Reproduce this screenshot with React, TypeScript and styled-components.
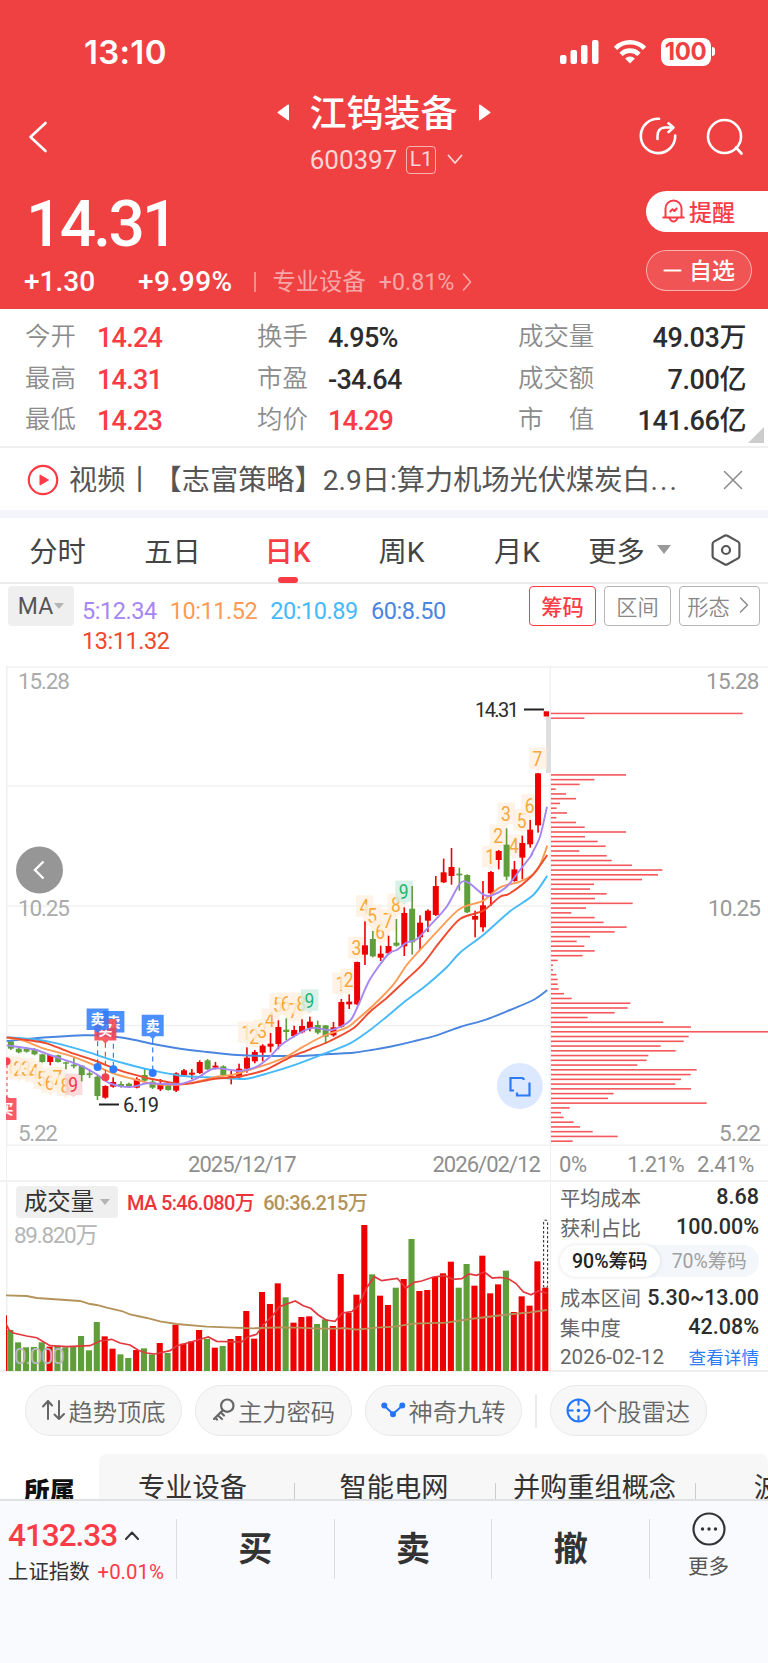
import React from "react";
import styled, { createGlobalStyle, css } from "styled-components";

const RED = "#fb3b45";
const UP = "#ee0000";
const DOWN = "#5f9e3a";
const BRAND = "#f04142";

const GlobalStyle = createGlobalStyle`
  * { box-sizing: border-box; }
  body { margin: 0; background: #fff; }
  #root { width: 768px; }
`;

const Page = styled.div`
  width: 768px;
  height: 1663px;
  overflow: hidden;
  display: flex;
  flex-direction: column;
  font-family: Roboto, "Noto Sans CJK SC", sans-serif;
  color: #333;
  white-space: nowrap;
`;

/* ---------- header ---------- */

const Header = styled.header`
  height: 309px;
  background: ${BRAND};
  color: #fff;
`;

const StatusBar = styled.div`
  height: 88px;
  padding: 15px 53px 0 84px;
  display: flex;
  align-items: center;
  justify-content: space-between;
`;

const Clock = styled.span`
  font: 600 33px/40px Inter, sans-serif;
  letter-spacing: 0.3px;
`;

const StatusIcons = styled.div`
  display: flex;
  align-items: center;
`;

const Battery = styled.div`
  width: 50px;
  height: 28px;
  margin-left: 14px;
  border-radius: 8px;
  background: #fff;
  color: ${BRAND};
  text-align: center;
  font: 700 24px/28px Inter, sans-serif;
  letter-spacing: -0.4px;
`;

const BatteryCap = styled.div`
  width: 3px;
  height: 9px;
  margin-left: 1.5px;
  border-radius: 0 4px 4px 0;
  background: #fff;
`;

const NavBar = styled.div`
  height: 94px;
  padding: 0 24px 0 28px;
  display: grid;
  grid-template-columns: 130px 1fr 130px;
  align-items: center;
  > svg { margin-top: 3px; }
`;

const NavTitle = styled.div`
  display: flex;
  flex-direction: column;
  align-items: center;
  padding-right: 5px;
`;

const TitleRow = styled.div`
  height: 48px;
  display: flex;
  align-items: center;
  gap: 20px;
  font-size: 37px;
  font-weight: 500;
  line-height: 44px;
  span { padding-top: 5px; }
`;

const CodeRow = styled.div`
  height: 46px;
  display: flex;
  align-items: center;
  padding: 1px 0 0 6px;
  font-size: 26px;
  color: rgba(255, 255, 255, 0.78);
`;

const LevelTag = styled.span`
  width: 30px;
  height: 28px;
  margin: 0 11px 0 9px;
  border: 1.5px solid rgba(255, 255, 255, 0.6);
  border-radius: 4px;
  text-align: center;
  font-size: 21px;
  line-height: 25px;
`;

const NavActions = styled.div`
  display: flex;
  justify-content: flex-end;
  align-items: center;
  gap: 29px;
  padding-top: 1px;
`;

const PriceBlock = styled.div`
  height: 127px;
  display: flex;
  justify-content: space-between;
`;

const PriceMain = styled.div`
  padding-left: 24px;
`;

const Price = styled.div`
  height: 81px;
  padding-left: 2px;
  font-size: 64px;
  font-weight: 500;
  line-height: 85px;
  letter-spacing: -2.7px;
`;

const ChangeRow = styled.div`
  height: 36px;
  display: flex;
  align-items: center;
  padding-top: 1px;
  font-size: 28px;
  line-height: 36px;
`;

const Change = styled.span<{ $w: number; $ls?: number }>`
  width: ${(p) => p.$w}px;
  font-weight: 500;
  letter-spacing: ${(p) => p.$ls ?? 0}px;
`;

const Divider = styled.i<{ $h: number; $color: string }>`
  width: 1.5px;
  height: ${(p) => p.$h}px;
  background: ${(p) => p.$color};
`;

const Sector = styled.span`
  display: flex;
  align-items: center;
  margin-left: 17px;
  font-size: 23.3px;
  color: rgba(255, 255, 255, 0.55);
  svg { margin-left: 8px; }
  b { font-weight: 400; margin-left: 13px; }
`;

const PriceActions = styled.div`
  width: 122px;
  padding-top: 9px;
  display: flex;
  flex-direction: column;
  gap: 18px;
`;

const pill = css`
  height: 41px;
  display: flex;
  align-items: center;
  padding-bottom: 2px;
  font-size: 23px;
  font-weight: 500;
`;

const RemindButton = styled.div`
  ${pill}
  padding-left: 16px;
  gap: 4px;
  border-radius: 21px 0 0 21px;
  background: #fff;
  color: ${RED};
`;

const WatchButton = styled.div`
  ${pill}
  width: 106px;
  padding-left: 16px;
  padding-bottom: 3px;
  gap: 7px;
  border: 1.5px solid rgba(255, 255, 255, 0.55);
  border-radius: 21px;
  background: rgba(255, 255, 255, 0.1);
  svg { margin-top: 3px; }
`;

/* ---------- quote grid ---------- */

const Quotes = styled.section`
  position: relative;
  height: 139px;
  padding: 8px 22px 0 25px;
  display: grid;
  grid-template-columns: 72px 160px 71px 190px 77px 1fr;
  grid-auto-rows: 41.5px;
  align-items: center;
  border-bottom: 2px solid #efefef;
`;

const QLabel = styled.span`
  font-size: 25.4px;
  line-height: 36px;
  color: #8c8c8c;
  padding-bottom: 3px;
  font-weight: 350;
`;

const QValue = styled.span<{ $up?: boolean; $end?: boolean }>`
  padding-top: 1px;
  font-size: 27px;
  font-weight: 500;
  line-height: 36px;
  letter-spacing: ${(p) => (p.$end ? -0.4 : -0.75)}px;
  color: ${(p) => (p.$up ? RED : "#2d2d2d")};
  text-align: ${(p) => (p.$end ? "right" : "left")};
`;

const Corner = styled.i`
  position: absolute;
  right: 4px;
  bottom: 3px;
  border: solid transparent;
  border-width: 0 0 16px 16px;
  border-bottom-color: #ccc;
`;

/* ---------- news ---------- */

const News = styled.section`
  height: 70px;
  padding: 1px 25px 0 27px;
  display: flex;
  align-items: center;
  border-bottom: 8px solid #f3f5fa;
`;

const NewsText = styled.span`
  flex: 1;
  margin-left: 10px;
  padding-top: 2px;
  font-size: 28.2px;
  line-height: 40px;
  color: #555;
  b { font-weight: 400; letter-spacing: 2px; }
`;

/* ---------- period tabs ---------- */

const Tabs = styled.nav`
  height: 66px;
  display: grid;
  grid-template-columns: 115px 115px 115px 113px 118px 107px 1fr;
  border-bottom: 2px solid #ebebeb;
`;

const Tab = styled.div<{ $active?: boolean }>`
  position: relative;
  display: flex;
  align-items: center;
  justify-content: center;
  gap: 12px;
  padding-bottom: 1px;
  font-size: 28.3px;
  font-weight: ${(p) => (p.$active ? 500 : 400)};
  color: ${(p) => (p.$active ? RED : "#444")};
  ${(p) =>
    p.$active &&
    css`
      &::after {
        content: "";
        position: absolute;
        bottom: -1px;
        width: 20px;
        height: 6px;
        border-radius: 3px;
        background: ${RED};
      }
    `}
`;

const Caret = styled.i<{ $size: number }>`
  border: ${(p) => p.$size}px solid transparent;
  border-top: ${(p) => p.$size * 1.3}px solid #999;
  border-bottom: 0;
`;

/* ---------- indicator bar ---------- */

const IndicatorBar = styled.div`
  height: 82px;
  padding: 2px 8px 0;
  display: flex;
  align-items: flex-start;
`;

const Selector = styled.div<{ $w: number; $h: number; $font: number; $ink: string; $gap: number }>`
  width: ${(p) => p.$w}px;
  height: ${(p) => p.$h}px;
  display: flex;
  align-items: center;
  justify-content: center;
  gap: ${(p) => p.$gap}px;
  flex: none;
  border-radius: 4px;
  background: #efefef;
  font-size: ${(p) => p.$font}px;
  color: ${(p) => p.$ink};
  i { border-top-color: #b3b3b3; }
`;

const MaList = styled.div`
  width: 440px;
  padding: 10px 0 0 8px;
  display: flex;
  flex-wrap: wrap;
  column-gap: 13px;
`;

const MaItem = styled.span<{ $color: string }>`
  height: 30px;
  line-height: 30px;
  font-size: 23.5px;
  letter-spacing: -0.45px;
  color: ${(p) => p.$color};
`;

const ModeGroup = styled.div`
  margin-left: auto;
  display: flex;
  gap: 8px;
`;

const Mode = styled.div<{ $active?: boolean; $w?: number }>`
  width: ${(p) => p.$w ?? 67}px;
  height: 40px;
  display: flex;
  align-items: center;
  justify-content: center;
  gap: ${(p) => (p.$w ? 9 : 0)}px;
  padding: ${(p) => (p.$w ? "0 3px 2px 0" : "0 0 2px")};
  border: 1.5px solid ${(p) => (p.$active ? RED : "#b5b5b5")};
  border-radius: 4px;
  font-size: 21.3px;
  font-weight: ${(p) => (p.$active ? 500 : 350)};
  color: ${(p) => (p.$active ? RED : "#888")};
`;

/* ---------- charts ---------- */

const ChartArea = styled.section`
  height: 480px;
  display: grid;
  grid-template-columns: 551px 217px;
  svg { display: block; }
`;

const AxisRow = styled.div`
  height: 36px;
  display: grid;
  grid-template-columns: 551px 217px;
  border-bottom: 2px solid #f1f1f1;
  font-size: 22px;
  color: #8e8e8e;
`;

const AxisCell = styled.div<{ $side?: boolean }>`
  display: flex;
  align-items: center;
  justify-content: space-between;
  letter-spacing: ${(p) => (p.$side ? -0.4 : -0.95)}px;
  margin-left: ${(p) => (p.$side ? -1 : 6)}px;
  padding: ${(p) => (p.$side ? "3px 14px 0 8px" : "3px 11px 0 181px")};
  border-left: 1.5px solid #efefef;
  span:nth-child(2) { margin-left: ${(p) => (p.$side ? 28 : 0)}px; }
`;

const VolumeRow = styled.section`
  height: 190px;
  display: grid;
  grid-template-columns: 551px 217px;
  border-bottom: 2px solid #efefef;
`;

const VolumePane = styled.div`
  position: relative;
`;

const VolumeHead = styled.div`
  position: absolute;
  left: 16px;
  top: 3px;
  display: flex;
  align-items: center;
  font-size: 20px;
  line-height: 32px;
`;

const VolumeMa = styled.span<{ $color: string }>`
  margin-left: 9px;
  padding-top: 2px;
  font-weight: 500;
  letter-spacing: -0.65px;
  color: ${(p) => p.$color};
`;

const CostPanel = styled.div`
  padding: 0 9px 0 9px;
  border-left: 1.5px solid #efefef;
  margin-left: -1px;
`;

const CostRow = styled.div`
  height: 29.7px;
  display: flex;
  align-items: center;
  justify-content: space-between;
  font-size: 20.3px;
  color: #666;
`;

const CostValue = styled.b`
  font-size: 21.5px;
  font-weight: 500;
  color: #2d2d2d;
`;

const DateText = styled.span`
  font-size: 20.6px;
`;

const DetailLink = styled.a`
  font-size: 17.6px;
  color: #2b7bf8;
`;

const Toggle = styled.div`
  height: 32px;
  margin: 4px 0 5px;
  display: flex;
  border-radius: 16px;
  background: #f3f6fb;
`;

const ToggleItem = styled.div<{ $active?: boolean }>`
  flex: 1;
  border-radius: 16px;
  text-align: center;
  font-size: 19.5px;
  line-height: 33px;
  font-weight: ${(p) => (p.$active ? 500 : 400)};
  color: ${(p) => (p.$active ? "#222" : "#a0a0a0")};
  background: ${(p) => (p.$active ? "#fff" : "transparent")};
  box-shadow: ${(p) => (p.$active ? "0 0 4px rgba(0,0,0,0.12)" : "none")};
`;

/* ---------- chips ---------- */

const ToolRow = styled.div`
  height: 82px;
  padding: 13px 25px 0;
  display: flex;
  gap: 13px;
`;

const ToolChip = styled.div`
  width: 157px;
  height: 51px;
  display: flex;
  align-items: center;
  justify-content: center;
  gap: 2px;
  padding-bottom: 1px;
  border: 1.5px solid #e9e9e9;
  border-radius: 26px;
  background: #f7f7f7;
  font-size: 24.3px;
  font-weight: 350;
  color: #666;
`;

const ToolSplit = styled.i`
  width: 1.5px;
  height: 34px;
  margin-top: 9px;
  background: #ececec;
`;

/* ---------- concepts ---------- */

const Concepts = styled.div`
  height: 45px;
  overflow: hidden;
  display: flex;
`;

const ConceptHead = styled.div`
  width: 99px;
  flex: none;
  padding: 19px 0 0 24px;
  font-size: 25.5px;
  font-weight: 900;
  line-height: 36px;
  color: #111;
`;

const ConceptStrip = styled.div`
  width: 669px;
  flex: none;
  overflow: hidden;
  display: flex;
  border-radius: 8px 8px 0 0;
  background: #f7f7f7;
`;

const Concept = styled.div<{ $w: number; $pad: number }>`
  width: ${(p) => p.$w}px;
  flex: none;
  padding-top: 15px;
  padding-right: ${(p) => p.$pad}px;
  text-align: center;
  font-size: 27.2px;
  line-height: 38px;
  color: #333;
  background: linear-gradient(#ccc, #ccc) right 29px / 1.5px 30px no-repeat;
`;

/* ---------- bottom bar ---------- */

const BottomBar = styled.footer`
  height: 164px;
  padding-top: 18px;
  display: flex;
  align-items: flex-start;
  border-top: 2px solid #e0e1e4;
  background: #f9fafd;
`;

const IndexBox = styled.div`
  width: 176px;
  padding-left: 8px;
`;

const IndexValue = styled.div`
  height: 37px;
  display: flex;
  align-items: center;
  gap: 8px;
  margin-top: -2px;
  font-size: 31.5px;
  font-weight: 500;
  letter-spacing: -1px;
  line-height: 37px;
  color: ${RED};
`;

const IndexName = styled.div`
  margin-top: 2px;
  font-size: 20.4px;
  line-height: 32px;
  span { margin-left: 8px; color: ${RED}; }
`;

const TradeButton = styled.div`
  width: 157.7px;
  height: 60px;
  border-left: 1.5px solid #dcdde0;
  text-align: center;
  font-size: 34px;
  font-weight: 700;
  line-height: 60px;
`;

const MoreButton = styled.div`
  flex: 1;
  height: 60px;
  display: flex;
  flex-direction: column;
  align-items: center;
  padding-right: 1px;
  border-left: 1.5px solid #dcdde0;
  font-size: 20.6px;
  line-height: 30px;
  color: #555;
  svg { flex: none; margin: -7px 0 6px; }
`;

/* ---------- chart data ---------- */

type Pt = [number, number];
const STEP = 7.868;
const candleX = (i: number) => 10.9 + STEP * i;

/* direction, high, body top, body bottom, low */
type Candle = [number, number, number, number, number];
const scaleRows = (base: number, rows: Candle[]): Candle[] =>
  rows.map(([d, ...v]) => [d, ...v.map((n) => base + n / 3)] as Candle);

const candles: Candle[] = [
  ...scaleRows(960, [
    [0, 244, 244, 266, 270], [0, 262, 266, 277, 280], [0, 262, 266, 275, 278],
    [0, 264, 267, 283, 286], [0, 281, 283, 306, 308], [1, 283, 285, 306, 316],
    [0, 284, 286, 306, 308], [0, 305, 307, 311, 328], [0, 292, 314, 319, 325],
    [0, 315, 317, 345, 364], [0, 328, 340, 345, 354], [0, 345, 350, 408, 420],
    [1, 376, 378, 413, 416], [1, 352, 366, 380, 383], [0, 364, 372, 379, 383],
    [0, 368, 371, 381, 384], [1, 352, 357, 383, 385], [0, 325, 345, 362, 366],
    [0, 360, 365, 383, 387], [1, 357, 372, 388, 393], [0, 370, 373, 390, 392],
    [1, 337, 340, 392, 396], [1, 327, 331, 346, 349], [1, 327, 338, 344, 357],
    [1, 301, 306, 339, 342], [0, 297, 301, 328, 330], [1, 306, 317, 323, 328],
    [0, 316, 319, 345, 349], [1, 333, 348, 354, 373], [1, 311, 326, 352, 359],
    [1, 262, 293, 326, 338], [1, 270, 276, 304, 310], [1, 253, 257, 278, 304],
    [1, 219, 251, 260, 277],
  ]),
  ...scaleRows(840, [
    [1, 541, 561, 612, 628], [0, 535, 569, 576, 601], [1, 557, 570, 588, 592],
    [1, 538, 558, 577, 580], [1, 530, 545, 564, 574], [0, 542, 555, 578, 583],
    [0, 555, 556, 590, 612], [1, 546, 562, 586, 590], [1, 477, 486, 560, 563],
    [1, 463, 485, 493, 507], [1, 365, 366, 493, 495], [1, 244, 316, 344, 375],
    [0, 273, 297, 349, 352], [1, 317, 341, 353, 363], [1, 287, 318, 340, 345],
    [0, 237, 308, 317, 320], [1, 202, 219, 319, 348], [0, 138, 206, 307, 344],
    [1, 226, 248, 292, 330], [1, 208, 212, 242, 276], [1, 108, 138, 225, 228],
    [1, 56, 97, 127, 129], [1, 24, 81, 108, 134], [0, 83, 101, 106, 152],
    [0, 103, 105, 217, 219], [1, 212, 228, 239, 292],
  ]),
  ...scaleRows(690, [
    [1, 573, 646, 712, 725], [1, 543, 546, 610, 648], [1, 480, 483, 510, 538],
    [0, 415, 464, 560, 571], [1, 513, 538, 573, 575], [1, 437, 459, 503, 568],
    [1, 390, 419, 463, 473], [1, 249, 250, 406, 428],
  ]),
];

const at = (ox: number, oy: number, pts: Pt[]): Pt[] =>
  pts.map(([x, y]) => [ox + x / 3, oy + y / 3]);

const averages: { color: string; pts: Pt[] }[] = [
  {
    color: "#4a85e0",
    pts: [
      ...at(0, 960, [[20, 243], [90, 236], [170, 230], [250, 226], [320, 227], [390, 237], [460, 252], [540, 266], [620, 276], [700, 284], [760, 287], [840, 288]]),
      ...at(220, 840, [[250, 648], [330, 642], [400, 638], [460, 629], [520, 618], [580, 604], [650, 586], [720, 561], [800, 538], [870, 510], [940, 480], [982, 450]]),
    ],
  },
  {
    color: "#45b9f9",
    pts: [
      ...at(0, 960, [[20, 232], [100, 238], [160, 248], [250, 272], [320, 295], [380, 312], [460, 332], [540, 347], [620, 352], [680, 355], [740, 356]]),
      ...at(220, 840, [[150, 698], [220, 676], [300, 646], [390, 610], [450, 570], [500, 530], [560, 480], [620, 435], [680, 382], [720, 338], [790, 285], [870, 214], [940, 165], [982, 107]]),
    ],
  },
  {
    color: "#ff9b55",
    pts: [
      ...at(0, 960, [[20, 233], [70, 242], [130, 265], [200, 284], [270, 310], [340, 340], [400, 357], [460, 371], [540, 374], [600, 363], [650, 350], [700, 344]]),
      ...at(220, 840, [[80, 692], [150, 670], [200, 650], [250, 620], [310, 588], [380, 563], [410, 540], [460, 496], [520, 434], [560, 375], [600, 330], [660, 265], [720, 206], [790, 182], [840, 142], [900, 125], [940, 103], [960, 75], [982, 17]]),
    ],
  },
  {
    color: "#f04a2c",
    pts: [
      ...at(0, 960, [[20, 232], [80, 240], [140, 250], [210, 277], [280, 300], [350, 328], [400, 343], [460, 358], [540, 372], [580, 369], [640, 357], [700, 352]]),
      ...at(220, 840, [[80, 705], [140, 688], [210, 652], [270, 628], [330, 603], [400, 565], [450, 515], [500, 474], [560, 418], [610, 370], [660, 305], [720, 237], [790, 212], [840, 170], [870, 160], [935, 108], [982, 45]]),
    ],
  },
  {
    color: "#a586f2",
    pts: [
      ...at(0, 960, [[20, 256], [100, 268], [150, 285], [240, 316], [290, 343], [330, 370], [390, 381], [440, 370], [480, 371], [540, 372], [590, 355], [640, 326], [700, 331]]),
      ...at(220, 840, [[60, 693], [110, 680], [150, 650], [190, 610], [270, 565], [335, 570], [390, 542], [415, 495], [450, 418], [505, 342], [530, 330], [560, 308], [590, 298], [625, 262], [680, 200], [720, 130], [745, 128], [790, 164], [815, 166], [860, 140], [900, 90], [935, 45]]),
      ...at(450, 690, [[245, 492], [270, 440], [291, 350]]),
    ],
  },
];

/* candle index, text, centre y, kind */
type Turn = [number, string, number, string?];
const turns: Turn[] = [
  ...([322, 328, 328, 337, 357, 368, 355, 378, 375].map((y, i) => [i, String(i + 1), 960 + y / 3, i === 8 ? "sell" : ""]) as Turn[]),
  ...([578, 590, 572, 540, 495, 492, 512, 492, 482].map((y, i) => [30 + i, String(i + 1), 840 + y / 3, i === 8 ? "buy" : ""]) as Turn[]),
  ...([432, 420, 325, 200, 228, 275, 242, 195, 156].map((y, i) => [42 + i, String(i + 1), 840 + y / 3, i === 8 ? "buy" : ""]) as Turn[]),
  ...([502, 438, 372, 468, 392, 347, 206].map((y, i) => [61 + i, String(i + 1), 690 + y / 3, ""]) as Turn[]),
];
const turnStyle: Record<string, [string, string]> = {
  "": ["#fef0e0", "#f9a63a"],
  sell: ["#fbd3d6", "#f2383f"],
  buy: ["#cfeee2", "#22b573"],
};

const costHead = [608, 133];
const costBars = [
  258, 163, 119, 47, 78, 108, 60, 50, 81, 49, 108, 134, 258, 135, 173, 197, 118, 200, 215, 276, 367, 354, 306, 162, 150,
  200, 165, 278, 138, 94, 164, 191, 260, 224, 150, 110, 133, 164, 128, 53, 39, 39, 49, 53, 53, 56, 72, 95, 271, 263, 224,
  143, 370, 453, 684, 446, 431, 362, 407, 325, 320, 292, 470, 452, 423, 406, 453, 221, 204, 500, 89, 63, 71, 101, 120,
  158, 233, 98,
];

const volumeTops = [
  450, 487, 502, 501, 487, 500, 497, 502, 501, 468, 511, 426, 469, 506, 523, 534, 510, 505, 523, 489, 519, 434, 491, 484,
  450, 477, 503, 498, 477, 468, 393, 476, 336, 372, 310, 352, 428, 411, 409, 432, 418, 438, 282, 399, 344, 135, 283, 347,
  375, 323, 297, 177, 333, 330, 291, 280, 245, 323, 252, 317, 227, 340, 313, 272, 396, 349, 377, 244, 323,
];
const fallingVolume = new Set([0, 1, 2, 3, 4, 6, 7, 8, 9, 10, 11, 14, 15, 17, 18, 20, 25, 27, 35, 39, 40, 46, 49, 51, 57, 58, 63]);

const volumeFast: Pt[] = [
  ...at(0, 1180, [[18, 432], [27, 450], [40, 459], [80, 468], [110, 473], [150, 497], [200, 500], [270, 497], [300, 483], [335, 478], [360, 489], [390, 495], [415, 511], [440, 519], [465, 522], [510, 512], [530, 498], [570, 487], [625, 471], [650, 484], [725, 486], [745, 470], [770, 463], [790, 435], [820, 405]]),
  ...at(270, 1180, [[28, 380], [50, 372], [76, 363], [100, 377], [122, 385], [145, 405], [168, 420], [195, 424], [217, 399], [245, 395], [265, 378], [290, 323], [313, 290], [335, 302], [382, 295], [408, 325], [432, 307], [455, 303], [490, 291], [525, 287], [548, 298], [575, 296], [597, 282], [620, 286], [643, 276], [667, 294], [690, 292], [715, 296], [737, 310], [760, 335], [783, 344], [805, 333], [831, 340]]),
];
const volumeSlow: Pt[] = [
  ...at(0, 1180, [[18, 346], [80, 348], [110, 354], [240, 363], [270, 372], [290, 375], [320, 383], [365, 393], [390, 403], [440, 414], [480, 424], [530, 432], [620, 440], [700, 443], [760, 445]]),
  ...at(270, 1180, [[28, 442], [80, 443], [150, 446], [200, 446], [220, 444], [260, 449], [320, 443], [375, 440], [430, 431], [530, 428], [600, 417], [700, 405], [780, 397], [831, 390]]),
];

const polyline = (pts: Pt[]) => pts.map((p) => p.map((n) => n.toFixed(1)).join(",")).join(" ");

function smooth(pts: Pt[]) {
  let d = `M${pts[0][0]},${pts[0][1]}`;
  for (let i = 0; i < pts.length - 1; i++) {
    const p0 = pts[i - 1] ?? pts[i];
    const p1 = pts[i];
    const p2 = pts[i + 1];
    const p3 = pts[i + 2] ?? p2;
    const c = [p1[0] + (p2[0] - p0[0]) / 7, p1[1] + (p2[1] - p0[1]) / 7, p2[0] - (p3[0] - p1[0]) / 7, p2[1] - (p3[1] - p1[1]) / 7, p2[0], p2[1]];
    d += `C${c.map((n) => n.toFixed(1)).join(" ")}`;
  }
  return d;
}

const AxisText = styled.text`
  font-size: 22.5px;
`;
const MarkText = styled.text`
  font-size: 20px;
  fill: #2b2b2b;
`;
const TurnText = styled.text`
  font-size: 19.5px;
  text-anchor: middle;
`;
const FlagText = styled.text`
  font: 700 14px "Noto Sans CJK SC", sans-serif;
  fill: #fff;
  text-anchor: middle;
`;

function Flag({ x, y, text, color, dot }: { x: number; y: number; text: string; color: string; dot: number }) {
  return (
    <g>
      <line x1={x} x2={x} y1={y + 13} y2={dot} stroke={color} strokeDasharray="5 4" strokeWidth="1.2" />
      <circle cx={x} cy={dot} r="4" fill={color} />
      <path d={`M${x - 11} ${y - 10.7}h22v21.4h-8l-3 3.3-3-3.3h-8z`} fill={color} opacity="0.86" />
      <FlagText x={x} y={y + 5}>{text}</FlagText>
    </g>
  );
}

function KLineChart() {
  return (
    <svg width="551" height="480" viewBox="0 666 551 480">
      <defs>
        <clipPath id="plot"><rect x="6" y="666" width="545" height="480" /></clipPath>
      </defs>
      <g stroke="#f1f1f1" strokeWidth="1.6">
        <path d="M6 667H551M6 786H551M6 906H551M6 1025.5H551M6 1145.3H551M6.7 666V1146M550.3 666V1146" />
      </g>
      <rect x="546" y="717" width="5" height="56" fill="#dedede" />
      <g fill="#ababab">
        <AxisText x="18" y="689" textLength="52">15.28</AxisText>
        <AxisText x="18" y="915.5" textLength="52">10.25</AxisText>
        <AxisText x="18" y="1141" textLength="40">5.22</AxisText>
      </g>
      <g clipPath="url(#plot)">
        {turns.map(([i, t, y, kind]) => {
          const x = candleX(i) - 0.4;
          const [bg, ink] = turnStyle[kind ?? ""];
          return (
            <g key={`${i}-${t}`}>
              <path d={`M${x - 8.6} ${y - 11.5}h17.6v21.5h-6l-2.8 2.5-2.8-2.5h-6z`} fill={bg} opacity="0.8" />
              <TurnText x={x - 0.2} y={y + 7} fill={ink} textLength="9.8" lengthAdjust="spacingAndGlyphs">{t}</TurnText>
            </g>
          );
        })}
        {candles.map(([d, hi, top, bot, lo], i) => (
          <g key={i} fill={d ? UP : DOWN}>
            <rect x={candleX(i) - 0.8} y={hi} width="1.6" height={lo - hi} />
            <rect x={candleX(i) - 3} y={top} width="6" height={bot - top} />
          </g>
        ))}
        <rect x="543.7" y="711.3" width="5.3" height="5.2" fill={UP} />
        {averages.map((a) => (
          <path key={a.color} d={smooth(a.pts)} fill="none" stroke={a.color} strokeWidth="1.9" />
        ))}
        <Flag x={113.4} y={1021.7} text="卖" color="#2f7dff" dot={1069.3} />
        <Flag x={105.4} y={1029.7} text="买" color="#f8404e" dot={1077.3} />
        <Flag x={97.6} y={1019.3} text="卖" color="#2f7dff" dot={1067} />
        <Flag x={152.7} y={1025.5} text="卖" color="#2f7dff" dot={1073} />
        <circle cx="6.5" cy="1061.3" r="4" fill="#f8404e" />
        <path d="M7 1065V1097" stroke="#f8404e" strokeDasharray="3 3" />
        <path d="M-5 1098h7l3.5-3 3.5 3h7.500v22h-22z" fill="#f8404e" opacity="0.86" />
        <FlagText x="6.5" y="1114">买</FlagText>
      </g>
      <path d="M524 709.5h20M99 1104.5h20" stroke="#222" strokeWidth="2" />
      <MarkText x="475" y="717" textLength="44">14.31</MarkText>
      <MarkText x="123" y="1112" textLength="36">6.19</MarkText>
      <circle cx="39.5" cy="870" r="23.5" fill="#969696" />
      <path d="M43.5 861.5l-8.5 8.5 8.5 8.5" fill="none" stroke="#fff" strokeWidth="2.4" />
      <circle cx="519.8" cy="1086" r="23" fill="#dce8ff" />
      <path d="M523.5 1078h-13v12.500h3.500M529.5 1082.500v13h-12.500v-3M523.500 1078v2" fill="none" stroke="#2b7bf8" strokeWidth="2.2" />
    </svg>
  );
}

function CostChart() {
  return (
    <svg width="217" height="480" viewBox="551 666 217 480">
      <path d="M551 667H768M551 1145.3H768" stroke="#f1f1f1" strokeWidth="1.6" />
      <g fill="#f4585c">
        {costHead.map((w, i) => (
          <rect key={i} x="551" y={712.7 + i * 4.75} width={540 + w / 3 - 551} height="1.5" />
        ))}
        {costBars.map((w, i) => (
          <rect key={i} x="551" y={774.1 + i * 4.757} width={540 + w / 3 - 551} height="1.6" />
        ))}
      </g>
      <g fill="#999">
        <AxisText x="706" y="689" textLength="53.5">15.28</AxisText>
        <AxisText x="708" y="915.5" textLength="53">10.25</AxisText>
        <AxisText x="719" y="1141" textLength="42">5.22</AxisText>
      </g>
    </svg>
  );
}

function VolumeChart() {
  return (
    <svg width="551" height="189" viewBox="0 1182 551 189">
      <defs>
        <clipPath id="vol"><rect x="6" y="1182" width="545" height="189" /></clipPath>
      </defs>
      <path d="M6.7 1182v189" stroke="#efefef" strokeWidth="1.6" />
      <AxisText x="14" y="1243" textLength="84" fill="#b5b5b5">89.820万</AxisText>
      <g clipPath="url(#vol)">
        <rect x="4" y="1315.3" width="3" height="57" fill={UP} />
        {volumeTops.map((t, i) => {
          const y = 1180 + t / 3;
          return <rect key={i} x={7.2 + STEP * i} y={y} width="6.1" height={1372 - y} fill={fallingVolume.has(i) ? DOWN : UP} />;
        })}
        <polyline points={polyline(volumeFast)} fill="none" stroke="#e2383d" strokeWidth="1.7" />
        <polyline points={polyline(volumeSlow)} fill="none" stroke="#b4935a" strokeWidth="1.8" />
      </g>
      <rect x="543.6" y="1220.3" width="4" height="67" rx="1" fill="none" stroke="#333" strokeDasharray="2.5 2" strokeWidth="1.1" />
      <AxisText x="14" y="1364" textLength="51" fill="#b8b8b8">0.000</AxisText>
    </svg>
  );
}

/* ---------- icons ---------- */

const Line = ({ w, h, d, sw = 2, color = "currentColor" }: { w: number; h: number; d: string; sw?: number; color?: string }) => (
  <svg width={w} height={h} viewBox={`0 0 ${w} ${h}`} fill="none" stroke={color} strokeWidth={sw} strokeLinecap="round" strokeLinejoin="round">
    <path d={d} />
  </svg>
);

const SignalIcon = () => (
  <svg width="39" height="24" fill="#fff">
    <rect x="0" y="15" width="6.5" height="9" rx="2" />
    <rect x="10.5" y="10" width="6.5" height="14" rx="2" />
    <rect x="21" y="5" width="6.5" height="19" rx="2" />
    <rect x="32" y="0" width="6.5" height="24" rx="2" />
  </svg>
);

const WifiSvg = styled.svg`
  margin-left: 14px;
`;

const WifiIcon = () => (
  <WifiSvg width="34" height="25" viewBox="0 0 34 25" fill="none" stroke="#fff" strokeWidth="4.6">
    <path d="M2.5 9.300a20.500 20.500 0 0 1 29 0" />
    <path d="M8 15.300a12.800 12.800 0 0 1 18 0" />
    <path d="M17 24.500l-4.900-5a7 7 0 0 1 9.800 0z" fill="#fff" stroke="none" />
  </WifiSvg>
);

const Arrow = ({ flip }: { flip?: boolean }) => (
  <svg width="13" height="17" viewBox="0 0 13 17" fill="#fff">
    <path d={flip ? "M1 1.500v14q0 1.500 1.400.5L12.300 9q.5-.500 0-1L2.400.8Q1 0 1 1.500z" : "M12 1.500v14q0 1.500-1.400.5L.7 9q-.5-.500 0-1L10.600.8Q12 0 12 1.500z"} />
  </svg>
);

const BellIcon = () => (
  <svg width="23" height="24" viewBox="0 0 23 24" fill="none" stroke={RED} strokeWidth="2" strokeLinecap="round" strokeLinejoin="round">
    <path d="M1.300 18.500h20.400M3.500 18V9.500a8 8 0 0 1 16 0V18" />
    <path d="M7.500 19q1.300 3.500 4 3.500t4-3.500M8.300 12.500l2.200-2.300 2 1.800 2.200-2.500" />
  </svg>
);

const PlayIcon = () => (
  <svg width="32" height="32" viewBox="0 0 32 32">
    <circle cx="16" cy="16" r="14.2" fill="none" stroke={RED} strokeWidth="2.2" />
    <path d="M13 11v10l8.500-5z" fill={RED} stroke={RED} strokeLinejoin="round" />
  </svg>
);

const HexIcon = () => (
  <svg width="30" height="32" viewBox="0 0 30 32" fill="none" stroke="#555" strokeWidth="2.2" strokeLinejoin="round">
    <path d="M13.500 1.800q1.500-.8 3 0L27 7.600q1.400.8 1.400 2.400v12q0 1.600-1.400 2.400L16.500 30.200q-1.500.8-3 0L3 24.400Q1.600 23.600 1.600 22V10Q1.600 8.400 3 7.600z" />
    <circle cx="15" cy="16" r="4" />
  </svg>
);

const NineIcon = () => (
  <svg width="25" height="16" viewBox="0 0 25 16" fill="#2374ff" stroke="#2374ff" strokeWidth="2">
    <path d="M3 3.500l9 8.500 9.500-8.500" fill="none" />
    <circle cx="3.3" cy="3.5" r="2" /><circle cx="12" cy="12.3" r="2" /><circle cx="21.3" cy="3.5" r="2" />
  </svg>
);

const RadarIcon = () => (
  <svg width="25" height="25" viewBox="0 0 25 25" fill="none" stroke="#2374ff" strokeWidth="2">
    <circle cx="12.5" cy="12.5" r="11" />
    <path d="M12.500 1v6.500M12.500 17.500V24M1 12.500h6.500M17.500 12.500H24" />
    <circle cx="12.5" cy="12.5" r="1.8" fill="#2374ff" stroke="none" />
  </svg>
);

const MoreIcon = () => (
  <svg width="34" height="34" viewBox="0 0 34 34">
    <circle cx="17" cy="17" r="15.5" fill="none" stroke="#333" strokeWidth="2.2" />
    <g fill="#333"><circle cx="10.5" cy="17" r="1.7" /><circle cx="17" cy="17" r="1.7" /><circle cx="23.5" cy="17" r="1.7" /></g>
  </svg>
);

const quotes: [string, string, boolean, string, string, boolean, string, string][] = [
  ["今开", "14.24", true, "换手", "4.95%", false, "成交量", "49.03万"],
  ["最高", "14.31", true, "市盈", "-34.64", false, "成交额", "7.00亿"],
  ["最低", "14.23", true, "均价", "14.29", true, "市　值", "141.66亿"],
];

const movingAverages = [
  ["5:12.34", "#a586f2"],
  ["10:11.52", "#ff9b55"],
  ["20:10.89", "#45b9f9"],
  ["60:8.50", "#4a85e0"],
  ["13:11.32", "#f04a2c"],
];

export default function App() {
  return (
    <Page>
      <GlobalStyle />
      <Header>
        <StatusBar>
          <Clock>13:10</Clock>
          <StatusIcons>
            <SignalIcon />
            <WifiIcon />
            <Battery>100</Battery>
            <BatteryCap />
          </StatusIcons>
        </StatusBar>
        <NavBar>
          <Line w={20} h={34} d="M17.500 3L2.500 17l15 14" sw={2.6} />
          <NavTitle>
            <TitleRow><Arrow /><span>江钨装备</span><Arrow flip /></TitleRow>
            <CodeRow>600397<LevelTag>L1</LevelTag><Line w={16} h={11} d="M1.500 1.500L8 9l6.500-7.500" sw={1.8} /></CodeRow>
          </NavTitle>
          <NavActions>
            <Line w={38} h={38} d="M20 1.800A17.200 17.200 0 1 0 36.200 18.500M18.500 22v-3q0-8 7.500-8.500h8M29.500 6.300l5 4.200-5 4.500" sw={2.6} />
            <Line w={38} h={38} d="M35 19.500a16.500 16.500 0 1 1-33 0a16.500 16.500 0 1 1 33 0M30 30.500l5.500 6" sw={2.6} />
          </NavActions>
        </NavBar>
        <PriceBlock>
          <PriceMain>
            <Price>14.31</Price>
            <ChangeRow>
              <Change $w={114}>+1.30</Change>
              <Change $w={116} $ls={0.5}>+9.99%</Change>
              <Divider $h={20} $color="rgba(255,255,255,.4)" />
              <Sector>专业设备<b>+0.81%</b><Line w={10} h={18} d="M1.500 1l7 8-7 8" sw={1.6} /></Sector>
            </ChangeRow>
          </PriceMain>
          <PriceActions>
            <RemindButton><BellIcon />提醒</RemindButton>
            <WatchButton><Line w={19} h={3} d="M1.500 1.500h16" sw={2.2} />自选</WatchButton>
          </PriceActions>
        </PriceBlock>
      </Header>

      <Quotes>
        {quotes.map(([a, av, au, b, bv, bu, c, cv]) => (
          <React.Fragment key={a}>
            <QLabel>{a}</QLabel><QValue $up={au}>{av}</QValue>
            <QLabel>{b}</QLabel><QValue $up={bu}>{bv}</QValue>
            <QLabel>{c}</QLabel><QValue $end>{cv}</QValue>
          </React.Fragment>
        ))}
        <Corner />
      </Quotes>

      <News>
        <PlayIcon />
        <NewsText>视频丨【志富策略】2.9日:算力机场光伏煤炭白<b>...</b></NewsText>
        <Line w={20} h={20} d="M1.500 1.500l17 17M18.500 1.500l-17 17" sw={1.5} color="#888" />
      </News>

      <Tabs>
        <Tab>分时</Tab>
        <Tab>五日</Tab>
        <Tab $active>日K</Tab>
        <Tab>周K</Tab>
        <Tab>月K</Tab>
        <Tab>更多<Caret $size={7} /></Tab>
        <Tab><HexIcon /></Tab>
      </Tabs>

      <IndicatorBar>
        <Selector $w={66} $h={40} $font={23} $ink="#555" $gap={1}>MA<Caret $size={5} /></Selector>
        <MaList>
          {movingAverages.map(([t, c]) => <MaItem key={t} $color={c}>{t}</MaItem>)}
        </MaList>
        <ModeGroup>
          <Mode $active>筹码</Mode>
          <Mode>区间</Mode>
          <Mode $w={81}>形态<Line w={10} h={16} d="M1.500 1l7 7-7 7" sw={1.4} /></Mode>
        </ModeGroup>
      </IndicatorBar>

      <ChartArea>
        <KLineChart />
        <CostChart />
      </ChartArea>
      <AxisRow>
        <AxisCell><span>2025/12/17</span><span>2026/02/12</span></AxisCell>
        <AxisCell $side><span>0%</span><span>1.21%</span><span>2.41%</span></AxisCell>
      </AxisRow>

      <VolumeRow>
        <VolumePane>
          <VolumeChart />
          <VolumeHead>
            <Selector $w={102} $h={32} $font={23.4} $ink="#333" $gap={6}>成交量<Caret $size={5} /></Selector>
            <VolumeMa $color="#ee343b">MA 5:46.080万</VolumeMa>
            <VolumeMa $color="#b4935a">60:36.215万</VolumeMa>
          </VolumeHead>
        </VolumePane>
        <CostPanel>
          <CostRow>平均成本<CostValue>8.68</CostValue></CostRow>
          <CostRow>获利占比<CostValue>100.00%</CostValue></CostRow>
          <Toggle><ToggleItem $active>90%筹码</ToggleItem><ToggleItem>70%筹码</ToggleItem></Toggle>
          <CostRow>成本区间<CostValue>5.30~13.00</CostValue></CostRow>
          <CostRow>集中度<CostValue>42.08%</CostValue></CostRow>
          <CostRow><DateText>2026-02-12</DateText><DetailLink>查看详情</DetailLink></CostRow>
        </CostPanel>
      </VolumeRow>

      <ToolRow>
        <ToolChip><Line w={25} h={22} d="M7 20V2M2 7.500L7 2l4 4.500M18 2v18M13.500 15.500L18 20l5-5" sw={2} />趋势顶底</ToolChip>
        <ToolChip><Line w={24} h={24} d="M21.500 7.700a6.200 6.200 0 1 1-12.400 0a6.200 6.200 0 1 1 12.400 0M11 12L2 21M6 17.500l4 3.500M3.500 20l1.500 1.500M9 14.500l3 3" sw={2.2} />主力密码</ToolChip>
        <ToolChip><NineIcon />神奇九转</ToolChip>
        <ToolSplit />
        <ToolChip><RadarIcon />个股雷达</ToolChip>
      </ToolRow>

      <Concepts>
        <ConceptHead>所属</ConceptHead>
        <ConceptStrip>
          <Concept $w={196} $pad={9}>专业设备</Concept>
          <Concept $w={201} $pad={3}>智能电网</Concept>
          <Concept $w={200} $pad={3}>并购重组概念</Concept>
          <Concept $w={200} $pad={3}>波动率</Concept>
        </ConceptStrip>
      </Concepts>

      <BottomBar>
        <IndexBox>
          <IndexValue>4132.33<Line w={14} h={9} d="M1 8l6-6.500L13 8" color="#333" /></IndexValue>
          <IndexName>上证指数<span>+0.01%</span></IndexName>
        </IndexBox>
        <TradeButton>买</TradeButton>
        <TradeButton>卖</TradeButton>
        <TradeButton>撤</TradeButton>
        <MoreButton><MoreIcon />更多</MoreButton>
      </BottomBar>
    </Page>
  );
}
